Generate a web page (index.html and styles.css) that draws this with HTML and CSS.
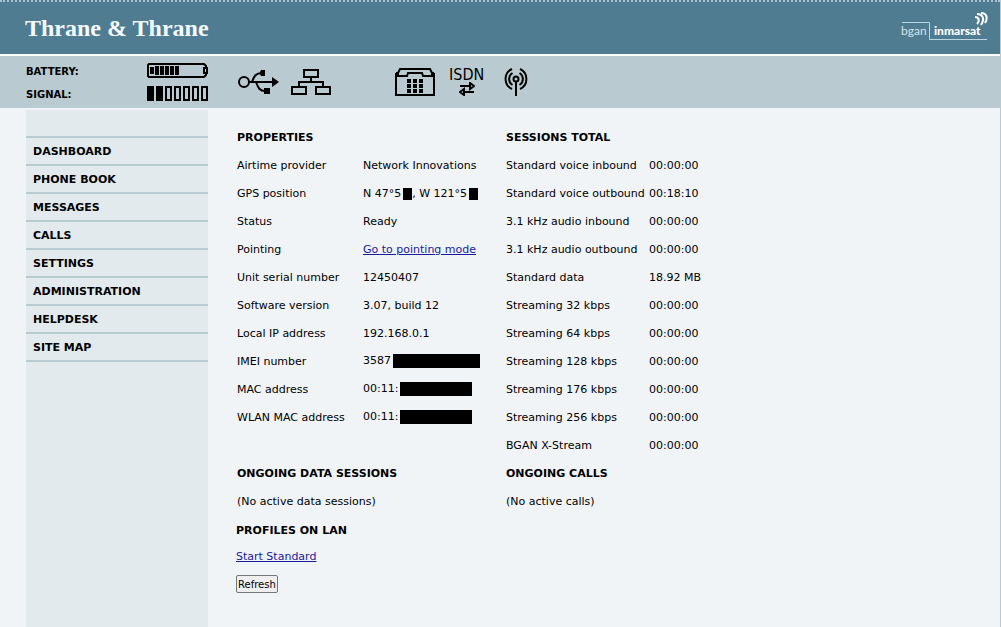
FILE: index.html
```
<!DOCTYPE html>
<html lang="en">
<head>
    <meta charset="utf-8">
    <title>Thrane &amp; Thrane - Dashboard</title>
    <link rel="stylesheet" href="styles.css">
</head>
<body>
<div class="page">
    <header class="header">
        <div class="brand">Thrane &amp; Thrane</div>
        <svg class="bgan-logo" width="88" height="30" viewBox="0 0 88 30" role="img" aria-label="bgan inmarsat">
            <path d="M2 10.500H29.500V27.500H87" fill="none" stroke="#b9d6e3"/>
            <text class="logo-bgan" x="1" y="23">bgan</text>
            <text class="logo-inmarsat" x="34" y="23">inmarsat</text>
            <g fill="none" stroke="#fff" stroke-width="2">
                <path d="M75 5c4 0 5 4 2 7"/>
                <path d="M77 2c6 0 8 5 4 11"/>
                <path d="M81 1c6 0 7 5 4 10"/>
            </g>
        </svg>
    </header>

    <!-- Battery, signal and interface icons -->
    <div class="status-bar">
        <div class="meters">
            <div class="meter">
                <span>BATTERY:</span>
                <svg width="61" height="15" viewBox="0 0 61 15" role="img" aria-label="Battery level">
                    <path d="M2 1H57L59 3V5H60V10H59V12L57 14H2L1 13V2Z" fill="none" stroke="#000" stroke-width="2"/>
                    <path d="M57 4V11" stroke="#000" stroke-width="2"/>
                    <path d="M3 4h4v7H3zM8 3h4v9H8zM13 3h4v9h-4zM18 3h4v9h-4zM23 3h4v9h-4zM28 3h4v9h-4z"/>
                </svg>
            </div>
            <div class="meter">
                <span>SIGNAL:</span>
                <svg width="61" height="15" viewBox="0 0 61 15" role="img" aria-label="Signal strength">
                    <path d="M0 0h7v15H0zM9 0h7v15H9z"/>
                    <path d="M19 1h5v13h-5zM28 1h5v13h-5zM37 1h5v13h-5zM46 1h5v13h-5zM55 1h5v13h-5z" fill="none" stroke="#000" stroke-width="2"/>
                </svg>
            </div>
        </div>
        <div class="icons">
            <svg width="41" height="26" viewBox="0 0 41 26" role="img" aria-label="USB">
                <g fill="none" stroke="#000" stroke-width="2">
                    <circle cx="6" cy="13" r="5"/>
                    <path d="M11 13H35M14 13C16 8 17 4 24 4M18 13C20 18 21 22 27 22"/>
                </g>
                <path d="M34 8L41 13L34 18Z"/>
                <path d="M23 1h4v6h-4l-1-2V3z"/>
                <path d="M26 19h6v6h-6z"/>
            </svg>
            <svg class="icon-lan" width="40" height="26" viewBox="0 0 40 26" role="img" aria-label="LAN">
                <path d="M13 1h14v7H13zM1 18h14v7H1zM25 18h14v7H25zM20 8v5M8 18v-5h24v5" fill="none" stroke="#000" stroke-width="2"/>
            </svg>
            <svg class="icon-phone" width="40" height="28" viewBox="0 0 40 28" role="img" aria-label="Phone">
                <path d="M1 5V27H39V5" fill="none" stroke="#000" stroke-width="2"/>
                <path d="M5 1H35L37 5V8H28L27 5H13L12 8H3V5ZM1 5H4M36 5H39" fill="none" stroke="#000" stroke-width="2"/>
                <path d="M12 11h4v4h-4zM18 11h4v4h-4zM24 11h4v4h-4zM12 16h4v4h-4zM18 16h4v4h-4zM24 16h4v4h-4zM12 21h4v4h-4zM18 21h4v4h-4zM24 21h4v4h-4z"/>
            </svg>
            <div class="icon-isdn">
                <span>ISDN</span>
                <svg width="16" height="14" viewBox="0 0 16 14" aria-hidden="true">
                    <path d="M1 4H11V1L15 4L11 7V4M15 10H5V7L1 10L5 13V10" fill="none" stroke="#000" stroke-width="2"/>
                </svg>
            </div>
            <svg class="icon-antenna" width="24" height="28" viewBox="0 0 24 28" role="img" aria-label="Antenna">
                <g fill="none" stroke="#000" stroke-width="2">
                    <circle cx="12" cy="11" r="2.500"/>
                    <path d="M12 13V28"/>
                    <path d="M8.500 17A7 7 0 0 1 8.500 5M15.500 17A7 7 0 0 0 15.500 5"/>
                    <path d="M8 21A11 11 0 0 1 8 1M16 21A11 11 0 0 0 16 1"/>
                </g>
            </svg>
        </div>
    </div>

    <div class="main">
        <nav class="sidebar">
            <ul>
                <li><a href="#">DASHBOARD</a></li>
                <li><a href="#">PHONE BOOK</a></li>
                <li><a href="#">MESSAGES</a></li>
                <li><a href="#">CALLS</a></li>
                <li><a href="#">SETTINGS</a></li>
                <li><a href="#">ADMINISTRATION</a></li>
                <li><a href="#">HELPDESK</a></li>
                <li><a href="#">SITE MAP</a></li>
            </ul>
        </nav>

        <main class="content">
            <table class="info">
                <colgroup>
                    <col class="col-name"><col class="col-value"><col class="col-session"><col class="col-total">
                </colgroup>
                <tr><th colspan="2">PROPERTIES</th><th colspan="2">SESSIONS TOTAL</th></tr>
                <tr><td>Airtime provider</td><td>Network Innovations</td><td>Standard voice inbound</td><td>00:00:00</td></tr>
                <tr><td>GPS position</td><td>N 47°5<span class="mask"></span>, W 121°5<span class="mask"></span></td><td>Standard voice outbound</td><td>00:18:10</td></tr>
                <tr><td>Status</td><td>Ready</td><td>3.1 kHz audio inbound</td><td>00:00:00</td></tr>
                <tr><td>Pointing</td><td><a href="#">Go to pointing mode</a></td><td>3.1 kHz audio outbound</td><td>00:00:00</td></tr>
                <tr><td>Unit serial number</td><td>12450407</td><td>Standard data</td><td>18.92 MB</td></tr>
                <tr><td>Software version</td><td>3.07, build 12</td><td>Streaming 32 kbps</td><td>00:00:00</td></tr>
                <tr><td>Local IP address</td><td>192.168.0.1</td><td>Streaming 64 kbps</td><td>00:00:00</td></tr>
                <tr><td>IMEI number</td><td>3587<span class="mask mask-imei"></span></td><td>Streaming 128 kbps</td><td>00:00:00</td></tr>
                <tr><td>MAC address</td><td>00:11:<span class="mask mask-mac"></span></td><td>Streaming 176 kbps</td><td>00:00:00</td></tr>
                <tr><td>WLAN MAC address</td><td>00:11:<span class="mask mask-mac"></span></td><td>Streaming 256 kbps</td><td>00:00:00</td></tr>
                <tr><td></td><td></td><td>BGAN X-Stream</td><td>00:00:00</td></tr>
                <tr><th colspan="2">ONGOING DATA SESSIONS</th><th colspan="2">ONGOING CALLS</th></tr>
                <tr><td colspan="2">(No active data sessions)</td><td colspan="2">(No active calls)</td></tr>
            </table>

            <h2>PROFILES ON LAN</h2>
            <p><a href="#">Start Standard</a></p>
            <button type="button" class="refresh">Refresh</button>
        </main>
    </div>
</div>
</body>
</html>
```
FILE: styles.css
```
/* Body styles */
body {
    margin: 0;
    font-family: Verdana, "DejaVu Sans", sans-serif;
    font-size: 11px;
    color: #000;
    background-color: #f0f4f7;
}

.page {
    display: flex;
    flex-direction: column;
    min-height: 100vh;
    box-sizing: border-box;
    border-right: 1px solid #b9cad0;
}

/* Header styles */
.header {
    display: flex;
    align-items: center;
    justify-content: space-between;
    height: 52px;
    padding: 0 12px 0 25px;
    border-top: 2px dotted #a9c1cf;
    border-bottom: 2px solid #fff;
    background-color: #507c91;
}

.brand {
    font-family: "Liberation Serif", serif;
    font-size: 24px;
    font-weight: bold;
    color: #f4fbff;
}

.bgan-logo {
    margin-bottom: 2px;
}

.logo-bgan,
.logo-inmarsat {
    font-family: Lato, sans-serif;
    font-size: 12px;
    fill: #d3e4ec;
}

.logo-inmarsat {
    font-weight: 900;
    fill: #fff;
}

/* Status bar styles */
.status-bar {
    display: flex;
    height: 52px;
    padding-left: 26px;
    background-color: #b9cad0;
}

.meters {
    display: flex;
    flex-direction: column;
    gap: 8px;
    width: 182px;
    padding-top: 7px;
}

.meter {
    display: flex;
    align-items: center;
    justify-content: space-between;
    font-size: 10px;
    font-weight: bold;
}

.meter span {
    padding-top: 2px;
}

.icons {
    display: flex;
    align-items: center;
    padding-left: 30px;
}

.icon-lan {
    margin-left: 12px;
}

.icon-phone {
    margin-left: 64px;
}

.icon-isdn {
    display: flex;
    flex-direction: column;
    align-items: center;
    margin-left: 14px;
    font-family: "DejaVu Sans Condensed", "DejaVu Sans", sans-serif;
    font-size: 16px;
    line-height: 14px;
}

.icon-antenna {
    margin-left: 20px;
}

/* Main area styles */
.main {
    display: flex;
    flex: 1;
    padding: 2px 0 0 26px;
}

.sidebar {
    flex: 0 0 182px;
    background-color: #e3eaed;
    font-weight: bold;
}

.sidebar ul {
    margin: 26px 0 0;
    padding: 0;
    list-style: none;
    border-top: 2px solid #b9cad0;
}

.sidebar li {
    border-bottom: 2px solid #b9cad0;
}

.sidebar a {
    display: block;
    padding: 1px 0 0 7px;
    line-height: 25px;
    color: #000;
    text-decoration: none;
}

.content {
    flex: 1;
    padding: 13px 0 32px 28px;
}

/* Properties and sessions table */
.info {
    width: 480px;
    table-layout: fixed;
    border-collapse: collapse;
}

.info th,
.info td {
    height: 28px;
    padding: 0 0 0 1px;
    text-align: left;
    white-space: nowrap;
}

.col-name {
    width: 126px;
}

.col-value,
.col-session {
    width: 143px;
}

.content a {
    color: #1a1a9c;
}

.content h2 {
    margin: 9px 0 12px;
    font-size: 11px;
    line-height: 14px;
}

.content p {
    margin: 0 0 11px;
    line-height: 14px;
}

.mask {
    display: inline-block;
    width: 9px;
    height: 12px;
    margin-left: 2px;
    vertical-align: middle;
    background-color: #000;
}

.mask-imei {
    width: 87px;
    height: 14px;
}

.mask-mac {
    width: 72px;
    height: 14px;
}

.refresh {
    display: block;
    height: 18px;
    padding: 0 1px;
    border: 1px solid #767676;
    border-radius: 2px;
    background-color: #efefef;
    font-family: Verdana, "DejaVu Sans", sans-serif;
    font-size: 10px;
    color: #000;
}
```
